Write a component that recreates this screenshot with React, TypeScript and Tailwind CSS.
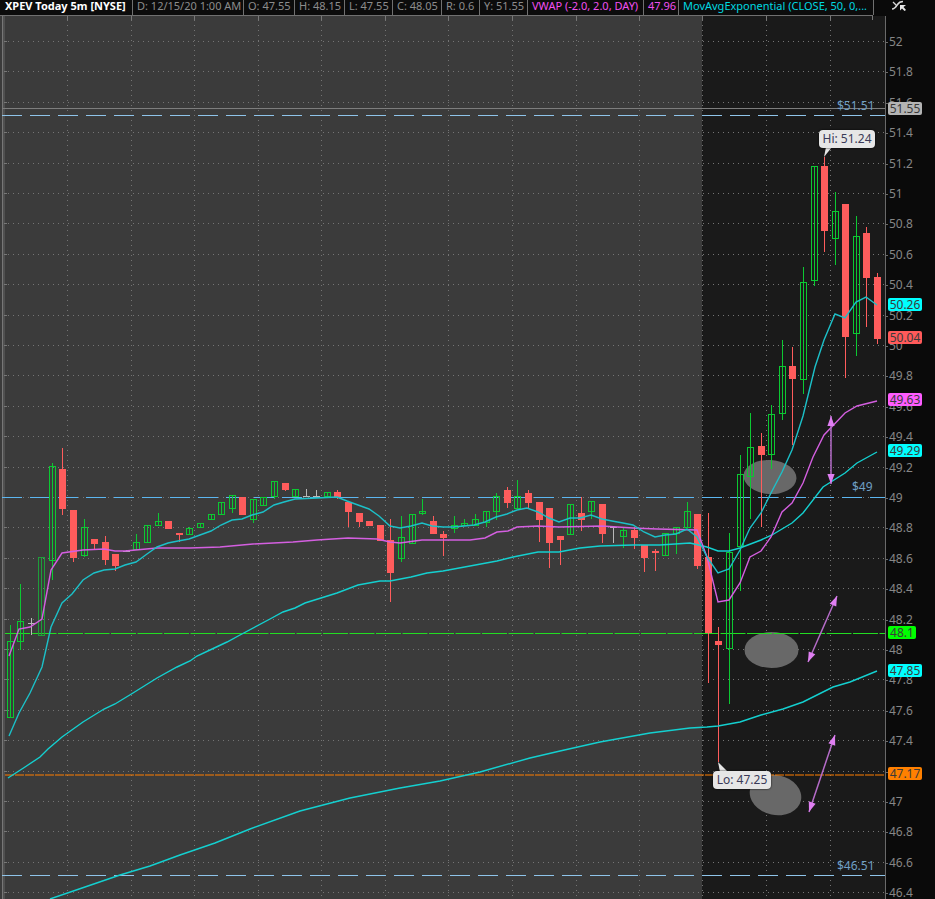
const slotX = (i: number) => 9.5 + i * 10.58;

// i, top, bottom, wickHigh, wickLow (pixels on the chart), kind
type Candle = [number, number, number, number, number, 'g' | 'r' | 'w' | 'd'];
const candles: Candle[] = [
  [0, 641, 717, 625, 717, 'g'], [1, 621, 641, 584, 650, 'g'], [2, 623, 623, 618, 635, 'w'], [3, 557, 635, 557, 635, 'd'],
  [4, 466, 560, 463, 580, 'g'], [5, 469, 509, 448, 515, 'r'], [6, 510, 558, 510, 562, 'r'], [7, 527, 555, 519, 557, 'g'],
  [8, 539, 544, 539, 549, 'r'], [9, 542, 560, 536, 565, 'r'], [10, 554, 566, 554, 571, 'r'], [11, 551, 551, 550, 552, 'w'],
  [12, 542, 549, 534, 549, 'g'], [13, 525, 542, 525, 542, 'g'], [14, 521, 525, 513, 525, 'g'], [15, 521, 529, 521, 529, 'r'],
  [16, 533, 535, 533, 542, 'r'], [17, 528, 534, 527, 534, 'g'], [18, 523, 527, 523, 527, 'g'], [19, 514, 519, 514, 519, 'g'],
  [20, 502, 514, 502, 514, 'g'], [21, 495, 508, 495, 513, 'g'], [22, 497, 515, 497, 515, 'r'], [23, 499, 519, 499, 523, 'g'],
  [24, 497, 505, 497, 505, 'g'], [25, 481, 496, 481, 499, 'g'], [26, 483, 490, 483, 491, 'r'], [27, 489, 496, 489, 496, 'g'],
  [28, 496, 496, 489, 497, 'w'], [29, 496, 496, 490, 496, 'w'], [30, 492, 496, 492, 496, 'g'], [31, 492, 497, 490, 499, 'r'],
  [32, 502, 512, 502, 527, 'r'], [33, 513, 522, 513, 527, 'r'], [34, 521, 526, 521, 526, 'r'], [35, 525, 541, 525, 541, 'r'],
  [36, 540, 573, 519, 602, 'r'], [37, 537, 558, 516, 562, 'g'], [38, 514, 543, 514, 543, 'g'], [39, 511, 513, 499, 515, 'g'],
  [40, 521, 534, 516, 534, 'r'], [41, 534, 538, 531, 556, 'r'], [42, 525, 528, 516, 533, 'g'], [43, 523, 525, 519, 525, 'g'],
  [44, 519, 525, 514, 525, 'g'], [45, 511, 522, 511, 527, 'g'], [46, 496, 511, 493, 520, 'g'], [47, 490, 503, 487, 508, 'r'],
  [48, 496, 508, 480, 508, 'g'], [49, 493, 503, 490, 508, 'r'], [50, 502, 520, 502, 542, 'r'], [51, 508, 543, 508, 568, 'r'],
  [52, 536, 540, 536, 565, 'r'], [53, 504, 534, 504, 534, 'g'], [54, 513, 520, 497, 531, 'r'], [55, 501, 511, 501, 519, 'g'],
  [56, 504, 534, 504, 543, 'r'], [57, 527, 527, 527, 543, 'w'], [58, 530, 536, 528, 548, 'g'], [59, 530, 538, 527, 549, 'r'],
  [60, 545, 558, 545, 572, 'r'], [61, 551, 553, 549, 571, 'r'], [62, 533, 555, 533, 555, 'g'], [63, 527, 533, 527, 554, 'g'],
  [64, 511, 527, 502, 527, 'g'], [65, 514, 566, 514, 569, 'r'], [66, 557, 633, 513, 683, 'r'], [67, 641, 645, 627, 762, 'r'],
  [68, 552, 648, 533, 704, 'g'], [69, 474, 546, 455, 591, 'g'], [70, 447, 476, 413, 519, 'g'], [71, 446, 455, 433, 527, 'r'],
  [72, 414, 454, 405, 469, 'g'], [73, 366, 413, 340, 420, 'g'], [74, 366, 379, 347, 445, 'r'], [75, 282, 379, 267, 394, 'g'],
  [76, 166, 280, 166, 286, 'g'], [77, 166, 231, 157, 252, 'r'], [78, 211, 238, 192, 265, 'g'], [79, 204, 337, 204, 378, 'r'],
  [80, 236, 333, 216, 356, 'g'], [81, 233, 278, 227, 327, 'r'], [82, 277, 339, 273, 344, 'r'],
];

const fastEma = '9,736 19,713 30,693 42,667 51,627 62,603 72,594 83,580 94,573 104,570 115,569 125,565 136,562 147,554 157,547 168,543 178,541 189,539 200,535 211,531 221,525 232,520 242,519 252,515 263,512 274,505 284,502 295,499 317,498 337,497 347,501 358,505 369,509 379,516 390,526 400,528 411,526 422,523 432,526 443,527 453,527 464,526 474,525 485,522 496,517 507,514 517,510 527,508 538,512 549,518 559,522 570,518 580,518 591,515 602,519 612,521 623,523 633,525 644,532 655,537 665,535 676,534 687,529 697,537 707,557 718,573 729,569 740,550 750,528 761,513 771,493 782,472 792,450 803,416 815,367 824,340 835,314 845,318 856,302 866,297 877,305';
const midEma = '8,778 25,767 40,757 48,749 62,737 83,722 104,709 115,704 133,693 157,678 177,667 190,661 197,656 210,650 227,642 240,635 270,619 283,612 295,608 305,603 337,593 358,585 380,581 390,581 411,577 427,573 443,571 470,566 497,561 513,557 538,552 559,552 580,548 600,546 633,545 660,545 690,543 707,547 718,551 729,551 740,548 761,540 772,535 792,523 803,513 823,487 845,473 857,463 877,452';
const slowEma = '50,899 85,887 120,875 150,866 180,855 215,843 250,829 300,811 350,798 400,788 440,781 480,772 530,758 560,751 600,742 650,733 690,728 707,727 718,726 740,722 761,715 783,709 803,702 833,687 850,682 877,671';
const vwap = '9,656 19,629 30,627 42,619 51,570 62,553 83,550 104,549 115,551 125,551 157,548 190,548 220,547 253,544 293,542 317,540 348,538 377,539 390,542 400,543 422,540 443,540 470,540 485,538 497,532 508,531 517,527 538,526 559,527 602,526 633,528 657,529 697,530 707,557 718,602 729,600 740,583 750,557 761,551 771,537 782,512 792,503 803,483 813,457 824,435 845,413 857,406 877,401';

const priceY = (p: number) => 41 + (52 - p) * 152;
const ticks = Array.from({ length: 29 }, (_, i) => 52 - i * 0.2);
const gridX = [67, 131, 194, 258, 321, 385, 448, 512, 576, 639, 702, 766, 830];

const headerCells = [
  { text: 'D: 12/15/20 1:00 AM', w: 'w-[111px]', color: 'text-[#8c8c8c]' },
  { text: 'O: 47.55', w: 'w-[51px]', color: 'text-[#8c8c8c]' },
  { text: 'H: 48.15', w: 'w-[50px]', color: 'text-[#8c8c8c]' },
  { text: 'L: 47.55', w: 'w-[48px]', color: 'text-[#8c8c8c]' },
  { text: 'C: 48.05', w: 'w-[49px]', color: 'text-[#8c8c8c]' },
  { text: 'R: 0.6', w: 'w-[38px]', color: 'text-[#8c8c8c]' },
  { text: 'Y: 51.55', w: 'w-[48px]', color: 'text-[#8c8c8c]' },
  { text: 'VWAP (-2.0, 2.0, DAY)', w: 'w-[116px]', color: 'text-[#f050f0]' },
  { text: '47.96', w: 'w-[35px]', color: 'text-[#f050f0]' },
  { text: 'MovAvgExponential (CLOSE, 50, 0,...', w: 'w-[195px]', color: 'text-[#00d8e0]' },
];

const badges = [
  { text: '51.55', top: 'top-[86px]', cls: 'w-[34px] bg-[#b4b4b4]' },
  { text: '50.26', top: 'top-[282px]', cls: 'w-[34px] bg-[#00ffff]' },
  { text: '50.04', top: 'top-[315px]', cls: 'w-[34px] bg-[#ff5a5a]' },
  { text: '49.63', top: 'top-[377px]', cls: 'w-[34px] bg-[#ff5cff]' },
  { text: '49.29', top: 'top-[428px]', cls: 'w-[34px] bg-[#00ffff]' },
  { text: '48.1', top: 'top-[610px]', cls: 'w-[28px] bg-[#00ff00]' },
  { text: '47.85', top: 'top-[648px]', cls: 'w-[34px] bg-[#00ffff]' },
  { text: '47.17', top: 'top-[751px]', cls: 'w-[34px] bg-[#ff8000]' },
];

function CandleMark({ c }: { c: Candle }) {
  const [i, top, bottom, high, low, kind] = c;
  const x = Math.round(slotX(i));
  const stroke = kind === 'r' ? '#ff5c5c' : kind === 'w' ? '#b8b8b8' : kind === 'd' ? '#1e9e3a' : '#0cc832';
  return (
    <g>
      <line x1={x + 0.5} x2={x + 0.5} y1={high} y2={low} stroke={stroke} strokeWidth={1} />
      {kind === 'r' && <rect x={x - 3} y={top} width={7} height={Math.max(bottom - top, 1)} fill="#ff5c5c" />}
      {(kind === 'g' || kind === 'd') && (
        <rect x={x - 2.5} y={top + 0.5} width={6} height={bottom - top} fill="none" stroke={stroke} strokeWidth={1} />
      )}
      {kind === 'w' && <line x1={x - 3} x2={x + 4} y1={top + 0.5} y2={top + 0.5} stroke={stroke} strokeWidth={1} />}
    </g>
  );
}

function Arrow({ x1, y1, x2, y2 }: { x1: number; y1: number; x2: number; y2: number }) {
  const a = Math.atan2(y2 - y1, x2 - x1);
  const head = (x: number, y: number, ang: number) => {
    const l = 10;
    const w = 3.6;
    const bx = x - Math.cos(ang) * l;
    const by = y - Math.sin(ang) * l;
    const px = -Math.sin(ang) * w;
    const py = Math.cos(ang) * w;
    return `${x},${y} ${bx + px},${by + py} ${bx - px},${by - py}`;
  };
  return (
    <g>
      <line x1={x1} y1={y1} x2={x2} y2={y2} stroke="#b56cc8" strokeWidth={1.5} />
      <polygon points={head(x1, y1, a + Math.PI)} fill="#e07ff2" />
      <polygon points={head(x2, y2, a)} fill="#e07ff2" />
    </g>
  );
}

function ChartDrawing() {
  return (
    <svg className="absolute inset-0" width={885} height={883} viewBox="0 16 885 883">
      {/* left edge */}
      <line x1={2.5} x2={2.5} y1={16} y2={899} stroke="#777" strokeWidth={1} />
      <line x1={4} x2={4} y1={16} y2={899} stroke="#666" strokeWidth={1} />

      {/* grid */}
      {ticks.map((p) => (
        <g key={p}>
          <line x1={8} x2={885} y1={Math.round(priceY(p)) + 0.5} y2={Math.round(priceY(p)) + 0.5} stroke="#747474" strokeDasharray="1 4" />
          <line x1={4} x2={7} y1={Math.round(priceY(p)) + 0.5} y2={Math.round(priceY(p)) + 0.5} stroke="#777" />
        </g>
      ))}
      {gridX.map((x) => (
        <g key={x}>
          <line x1={x + 0.5} x2={x + 0.5} y1={20} y2={899} stroke="#747474" strokeDasharray="1 4" />
          <line x1={x + 0.5} x2={x + 0.5} y1={16} y2={20} stroke="#777" />
        </g>
      ))}
      <line x1={872.5} x2={872.5} y1={16} y2={20} stroke="#777" />

      {/* marked ellipses */}
      <ellipse cx={770} cy={477} rx={26.5} ry={17} transform="rotate(4 770 477)" fill="#686868" />
      <ellipse cx={771.5} cy={650} rx={27} ry={18} fill="#686868" />
      <ellipse cx={775.5} cy={795} rx={26} ry={20} transform="rotate(12 775.5 795)" fill="#686868" />

      {/* levels */}
      <line x1={2} x2={885} y1={108.5} y2={108.5} stroke="#7d7d7d" />
      <line x1={2} x2={885} y1={115.5} y2={115.5} stroke="#8fc4ea" strokeDasharray="20 8" />
      <line x1={2} x2={885} y1={497.5} y2={497.5} stroke="#5cb6f0" strokeDasharray="20 8" />
      <line x1={2} x2={885} y1={875.5} y2={875.5} stroke="#8fc4ea" strokeDasharray="20 8" />
      <line x1={5} x2={885} y1={633.5} y2={633.5} stroke="#22dd22" strokeDasharray="25 1.5" />
      <line x1={5} x2={885} y1={775} y2={775} stroke="#ff7f00" strokeWidth={1.2} strokeDasharray="9 1" />

      {candles.map((c) => (
        <CandleMark key={c[0]} c={c} />
      ))}

      <polyline points={slowEma} fill="none" stroke="#14d0d0" strokeWidth={1.4} />
      <polyline points={midEma} fill="none" stroke="#14d0d0" strokeWidth={1.4} />
      <polyline points={vwap} fill="none" stroke="#d45fe0" strokeWidth={1.4} />
      <polyline points={fastEma} fill="none" stroke="#1cc0c8" strokeWidth={1.4} />

      <Arrow x1={831} y1={416} x2={831} y2={484} />
      <Arrow x1={837} y1={596} x2={808} y2={662} />
      <Arrow x1={835} y1={735} x2={809} y2={812} />

      {/* callout pointers */}
      <polygon points="824,157 826,147 832,147" fill="#e6e6e6" />
      <polygon points="718,762 720,772 728,772" fill="#e6e6e6" />
    </svg>
  );
}

function Callout({ pos, text }: { pos: string; text: string }) {
  return (
    <div className={`absolute ${pos} rounded-[4px] bg-[#e6e6e6] text-center text-[12px] leading-[18px] text-[#3a3a58] shadow-[0_0_2px_#000]`}>
      {text}
    </div>
  );
}

function LevelLabel({ pos, text }: { pos: string; text: string }) {
  return <div className={`absolute ${pos} text-[12px] leading-[14px] text-[#6f9fc4]`}>{text}</div>;
}

export default function App() {
  return (
    <div className="flex h-[899px] w-[935px] flex-col overflow-hidden bg-[#0a0a0a] font-['Noto_Sans',sans-serif]">
      {/* study header */}
      <div className="flex h-[16px] w-full shrink-0 items-stretch">
        <div className="flex w-[873px] items-stretch border-b border-[#707070] bg-[#0c0c0c] text-[11px] leading-[12px]">
          <div className="w-[133px] shrink-0 border-r border-[#707070] pl-[5px] font-bold whitespace-nowrap text-white">
            XPEV Today 5m [NYSE]
          </div>
          {headerCells.map((cell) => (
            <div key={cell.text} className={`${cell.w} ${cell.color} shrink-0 border-r border-[#707070] pl-[4px] whitespace-nowrap`}>
              {cell.text}
            </div>
          ))}
        </div>
        <div className="relative flex-1">
          <svg className="absolute top-0 left-[17px]" width={20} height={12} viewBox="0 0 20 12">
            <path d="M2 9 C5 9 6 7 7.5 4.5 C9 2 10 1.5 13 1.5" fill="none" stroke="#d8d8d8" strokeWidth={1.5} />
            <path d="M3 2 L7 6" fill="none" stroke="#d8d8d8" strokeWidth={1.2} />
            <path d="M10 5 L16 5 L13.5 7 L16 10 L14.5 11 L12 8.5 L10 10.5 Z" fill="#e8e8e8" />
          </svg>
        </div>
      </div>

      <div className="flex min-h-0 flex-1">
        {/* price pane */}
        <div className="relative flex w-[885px] shrink-0">
          <div className="w-[702px] bg-[#3b3b3b]" />
          <div className="flex-1 bg-[#1a1a1a]" />
          <ChartDrawing />
          <Callout pos="left-[819px] top-[114px] w-[56px]" text="Hi: 51.24" />
          <Callout pos="left-[713px] top-[755px] w-[58px]" text="Lo: 47.25" />
          <LevelLabel pos="left-[837px] top-[83px]" text="$51.51" />
          <LevelLabel pos="left-[852px] top-[464px]" text="$49" />
          <LevelLabel pos="left-[837px] top-[843px]" text="$46.51" />
        </div>

        {/* price axis */}
        <div className="relative flex-1 border-l border-[#6a6a6a] bg-[#0a0a0a]">
          {ticks.map((p) => (
            <div
              key={p}
              className="absolute flex h-[14px] items-center text-[12px] text-[#868686]"
              style={{ top: Math.round(priceY(p)) - 22 }}
            >
              <span className="mr-[1px] h-[1px] w-[2px] bg-[#6a6a6a]" />
              {Number(p.toFixed(1))}
            </div>
          ))}
          {badges.map((b) => (
            <div
              key={b.text}
              className={`absolute left-[2px] ${b.top} ${b.cls} h-[13px] rounded-[2px] text-center text-[12px] leading-[13px] text-[#3a3a3a]`}
            >
              {b.text}
            </div>
          ))}
        </div>
      </div>
    </div>
  );
}
